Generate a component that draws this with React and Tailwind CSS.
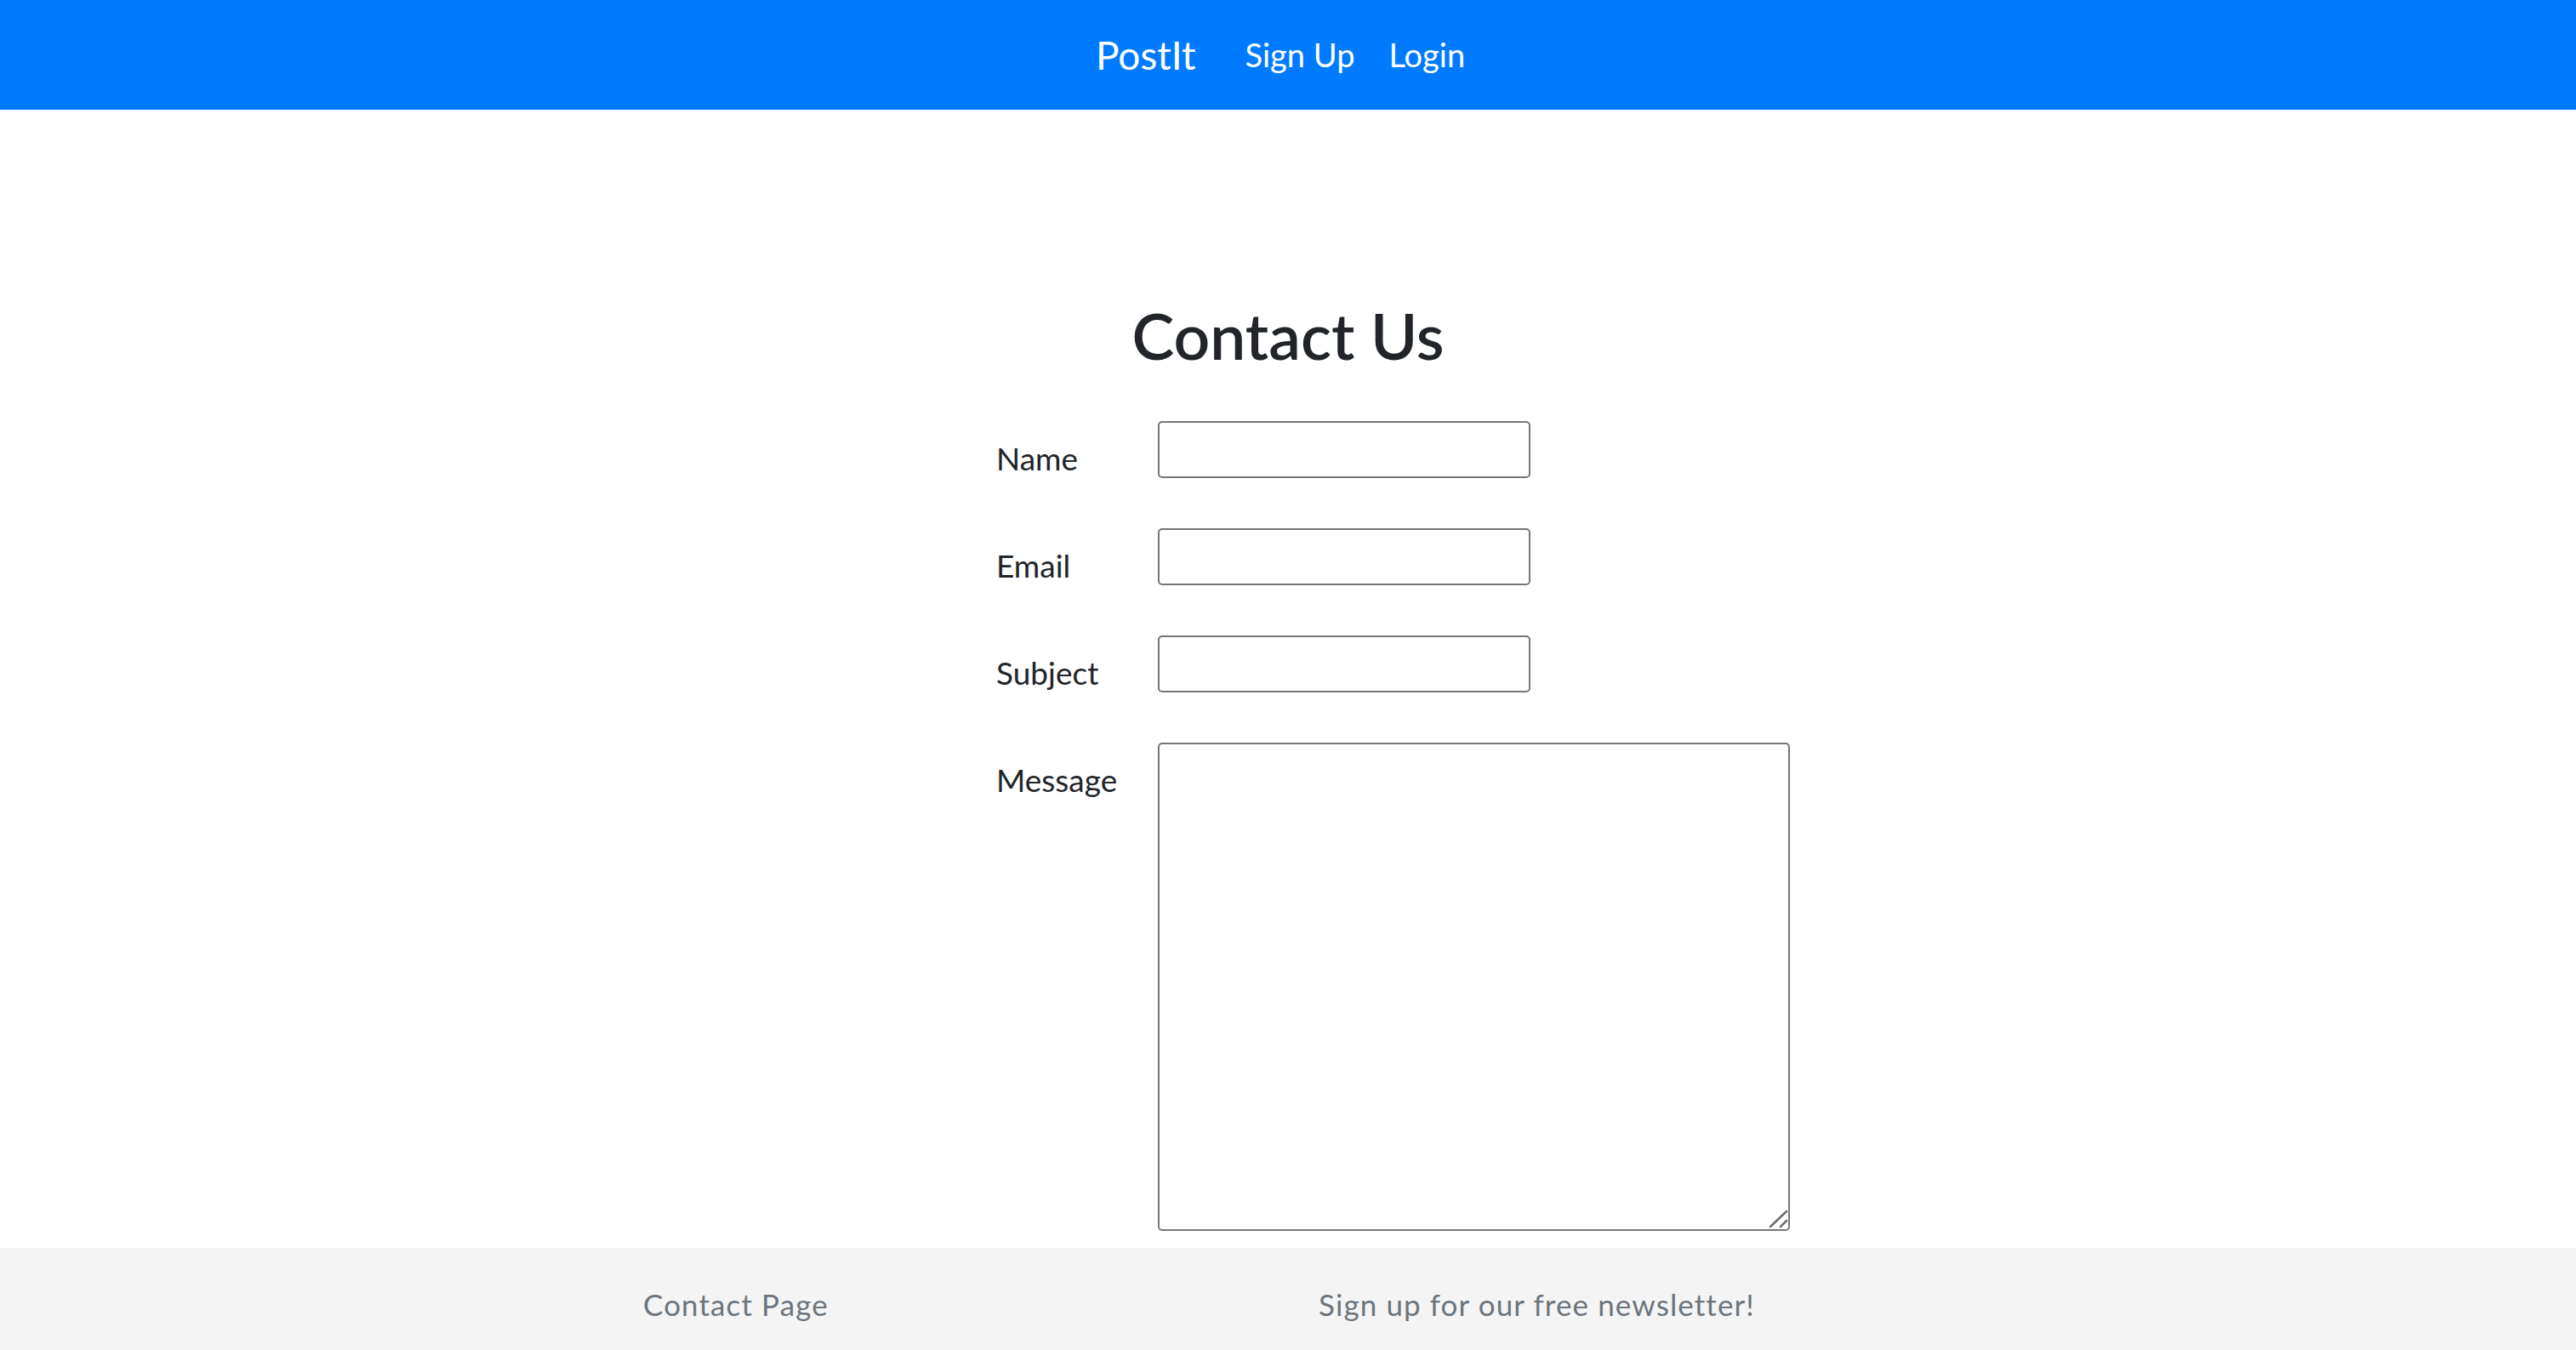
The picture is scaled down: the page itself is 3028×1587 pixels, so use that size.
export default function App() {
  const inputCls =
    "w-[438px] h-[67px] border-2 border-[#767676] rounded-[5px] bg-white outline-none";
  const labelCls = "pt-[22px] text-[37px] leading-[1.2] text-[#212529]";
  return (
    <div className="min-h-screen flex flex-col bg-white text-[#212529] font-[Lato,sans-serif]">
      <nav className="h-[129px] bg-[#007bff] flex items-center justify-center pr-[18px] text-white">
        <span className="text-[46px] leading-[1.2] mr-[58px]">PostIt</span>
        <a className="text-[38px] leading-[1.2] mr-[40px]" href="#">
          Sign Up
        </a>
        <a className="text-[38px] leading-[1.2]" href="#">
          Login
        </a>
      </nav>

      <main className="flex-1 flex flex-col">
        <h1 className="mt-[220px] text-center text-[75px] font-semibold leading-[1.2] text-[#212529]">
          Contact Us
        </h1>
        <form className="mt-[56px] ml-[1171px] grid grid-cols-[190px_auto] gap-y-[59px] items-start">
          <label className={labelCls}>Name</label>
          <input type="text" className={inputCls} />
          <label className={labelCls}>Email</label>
          <input type="email" className={inputCls} />
          <label className={labelCls}>Subject</label>
          <input type="text" className={inputCls} />
          <label className={labelCls}>Message</label>
          <div className="relative w-[743px] h-[574px]">
            <textarea className="w-full h-full border-2 border-[#767676] rounded-[5px] resize-none outline-none bg-white block" />
            <svg
              className="absolute right-0 bottom-0 pointer-events-none"
              width="30"
              height="30"
              viewBox="0 0 30 30"
            >
              <line x1="7" y1="25" x2="26" y2="7" stroke="#6e6e6e" strokeWidth="2.6" strokeLinecap="round" />
              <line x1="19" y1="25" x2="26" y2="18" stroke="#6e6e6e" strokeWidth="2.6" strokeLinecap="round" />
            </svg>
          </div>
        </form>
      </main>

      <footer className="h-[120px] bg-[#f4f4f4] flex items-start pt-[45px] pl-[756px] text-[#6c757d]">
        <span className="w-[794px] text-[35px] leading-[1.2] tracking-[1.1px]">Contact Page</span>
        <span className="text-[35px] leading-[1.2] tracking-[1.1px]">
          Sign up for our free newsletter!
        </span>
      </footer>
    </div>
  );
}
